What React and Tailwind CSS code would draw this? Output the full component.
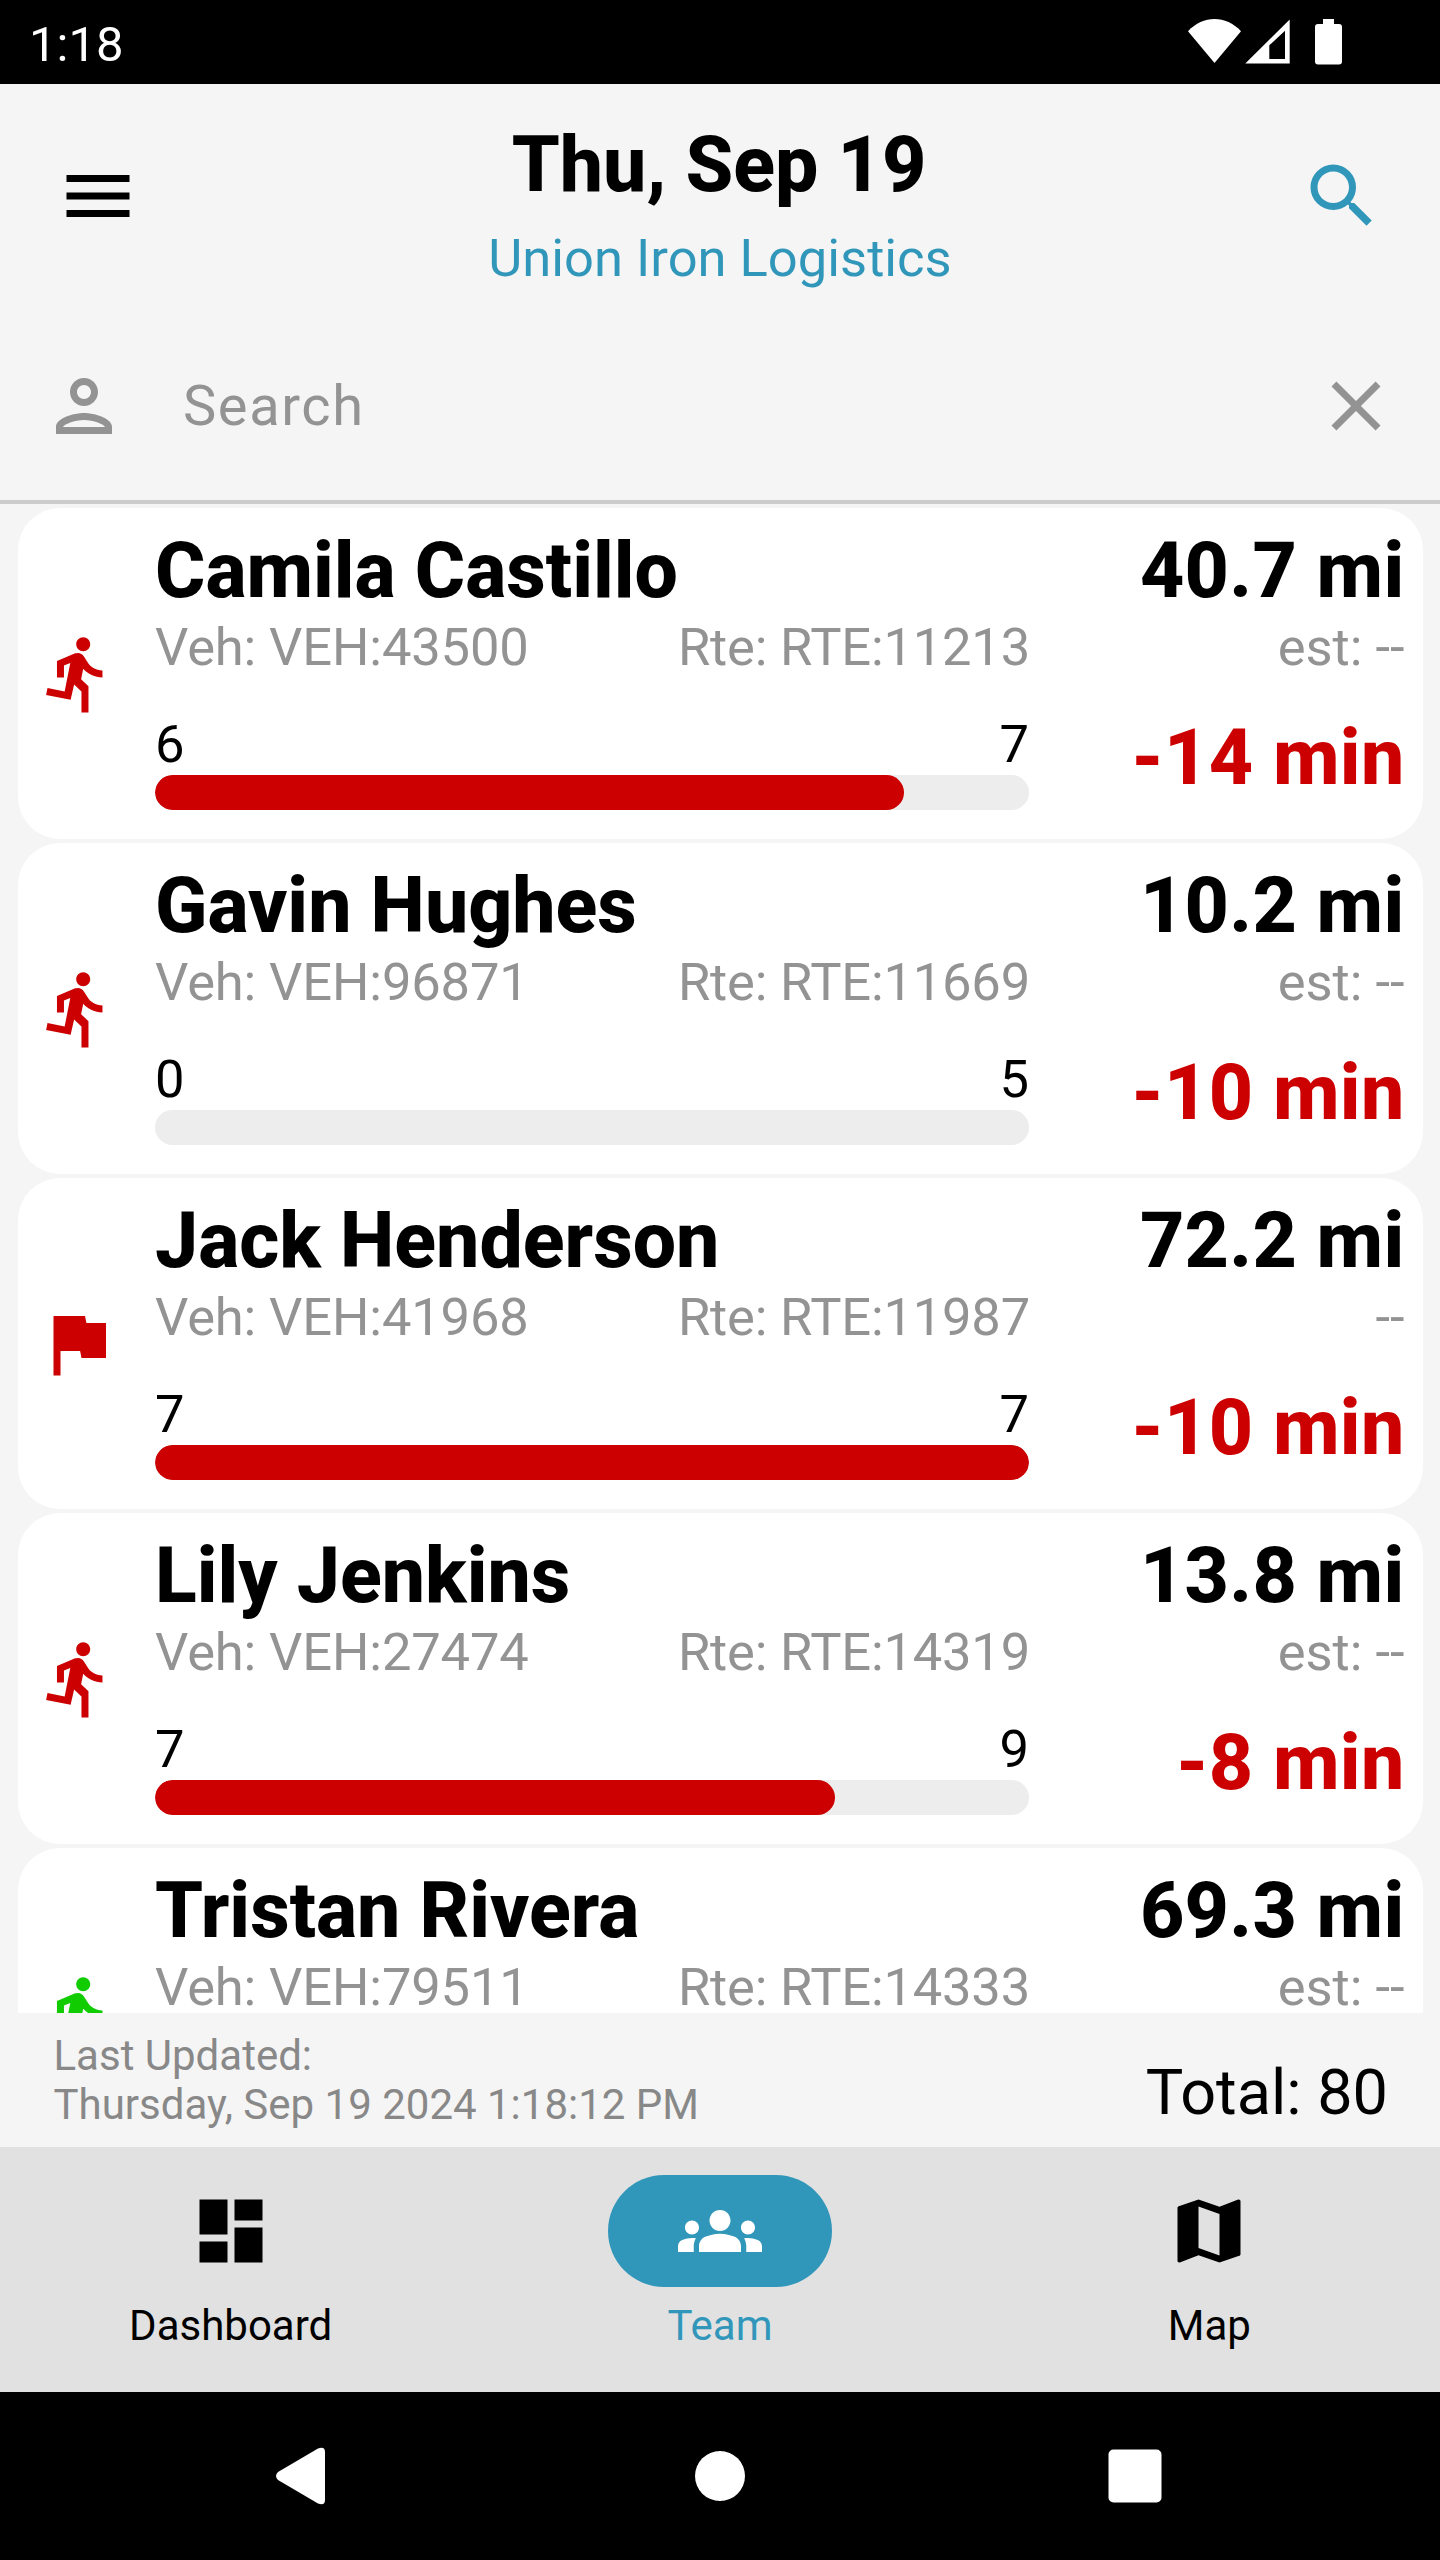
import {
  MdClose,
  MdDashboard,
  MdDirectionsRun,
  MdFlag,
  MdGroups,
  MdMap,
  MdMenu,
  MdOutlinePerson,
  MdSearch,
} from "react-icons/md";

const drivers = [
  {
    name: "Camila Castillo",
    vehicle: "VEH:43500",
    route: "RTE:11213",
    done: 6,
    total: 7,
    miles: "40.7 mi",
    estimate: "est: --",
    delta: "-14 min",
    status: "late",
  },
  {
    name: "Gavin Hughes",
    vehicle: "VEH:96871",
    route: "RTE:11669",
    done: 0,
    total: 5,
    miles: "10.2 mi",
    estimate: "est: --",
    delta: "-10 min",
    status: "late",
  },
  {
    name: "Jack Henderson",
    vehicle: "VEH:41968",
    route: "RTE:11987",
    done: 7,
    total: 7,
    miles: "72.2 mi",
    estimate: "--",
    delta: "-10 min",
    status: "finished",
  },
  {
    name: "Lily Jenkins",
    vehicle: "VEH:27474",
    route: "RTE:14319",
    done: 7,
    total: 9,
    miles: "13.8 mi",
    estimate: "est: --",
    delta: "-8 min",
    status: "late",
  },
  {
    name: "Tristan Rivera",
    vehicle: "VEH:79511",
    route: "RTE:14333",
    miles: "69.3 mi",
    estimate: "est: --",
    status: "ontime",
  },
];

const StatusBar = () => {
  return (
    <div className="h-[84px] shrink-0 bg-black flex items-center justify-between pl-[29px] pr-[97px] text-white">
      <span className="text-[49px] leading-none pt-1">1:18</span>
      <svg width="156" height="84" viewBox="0 0 156 84" fill="#fff">
        <path d="M1 31.3C16 15 39 15 54 31.3L27.5 63Z" />
        <path
          fillRule="evenodd"
          d="M102.7 19.5V63.5H58.3ZM98 30.7L82.3 45.3V59H98Z"
        />
        <path d="M136 19h11v5h5a3 3 0 0 1 3 3v34.500a3 3 0 0 1-3 3h-21a3 3 0 0 1-3-3V27a3 3 0 0 1 3-3h5z" />
      </svg>
    </div>
  );
};

const Header = () => {
  return (
    <div className="h-[280px] shrink-0 flex justify-between items-start px-14">
      <MdMenu className="size-[84px] mt-[70px]" />
      <div className="flex flex-col items-center pt-[36px]">
        <h1 className="text-[77px] leading-[90px] font-extrabold mr-[2px]">
          Thu, Sep 19
        </h1>
        <h2 className="text-[52.5px] leading-[62px] mt-[17px] text-[#3197ba]">
          Union Iron Logistics
        </h2>
      </div>
      <MdSearch className="size-[84px] mt-[70px] text-[#3197ba]" />
    </div>
  );
};

const SearchBar = () => {
  return (
    <div className="h-[140px] shrink-0 flex items-center px-[42px] pb-[52px] border-b-4 border-[#cccccc] text-[#939393]">
      <MdOutlinePerson className="size-[84px]" />
      <span className="text-[56px] tracking-[1.6px] ml-[57px] grow">
        Search
      </span>
      <MdClose className="size-[84px]" />
    </div>
  );
};

const StatusIcon = ({ status }) => {
  if (status === "finished") {
    return <MdFlag className="size-[84px] text-[#cc0000]" />;
  }
  if (status === "ontime") {
    return <MdDirectionsRun className="size-[84px] text-[#10cc00]" />;
  }
  return <MdDirectionsRun className="size-[84px] text-[#cc0000]" />;
};

const DriverCard = ({ driver }) => {
  return (
    <div className="h-[331px] shrink-0 flex bg-white rounded-[42px] px-[18px]">
      <div className="w-[119.5px] flex items-center">
        <StatusIcon status={driver.status} />
      </div>
      <div className="w-[874px] flex flex-col pt-[18px]">
        <div className="text-[77px] leading-[90px] font-extrabold whitespace-nowrap">
          {driver.name}
        </div>
        <div className="flex justify-between text-[52.5px] leading-[62px] text-[#939393]">
          <span className="tracking-[-0.15px]">Veh: {driver.vehicle}</span>
          <span className="tracking-[-0.2px] mr-[-1px]">
            Rte: {driver.route}
          </span>
        </div>
        {driver.total && (
          <>
            <div className="flex justify-between text-[52.5px] leading-[62px] mt-[35px]">
              <span>{driver.done}</span>
              <span>{driver.total}</span>
            </div>
            <div className="h-[35px] bg-[#ededed] rounded-full overflow-hidden">
              <div
                className="h-full bg-[#cc0000] rounded-full"
                style={{ width: `${(driver.done / driver.total) * 100}%` }}
              ></div>
            </div>
          </>
        )}
      </div>
      <div className="grow flex flex-col items-end pt-[18px]">
        <div className="text-[77px] leading-[90px] font-extrabold tracking-[0.3px]">
          {driver.miles}
        </div>
        <div className="text-[52.5px] leading-[62px] text-[#939393]">
          {driver.estimate}
        </div>
        <div className="text-[77px] leading-[90px] mt-[35px] font-extrabold tracking-[0.3px] text-[#cc0000]">
          {driver.delta}
        </div>
      </div>
    </div>
  );
};

const NavItem = ({ icon, label, active }) => {
  return (
    <div className="flex-1 flex flex-col items-center pt-7">
      <div
        className={
          active
            ? "w-56 h-28 rounded-full flex items-center justify-center bg-[#3197ba] text-white"
            : "w-56 h-28 flex items-center justify-center text-black"
        }
      >
        {icon}
      </div>
      <span
        className={
          active
            ? "text-[42px] leading-[56px] mt-[11px] text-[#3197ba]"
            : "text-[42px] leading-[56px] mt-[11px] text-black"
        }
      >
        {label}
      </span>
    </div>
  );
};

const SystemNav = () => {
  return (
    <div className="h-[168px] shrink-0 bg-black flex justify-center">
      <svg width="900" height="168" viewBox="0 0 900 168" fill="#fff">
        <path d="M8 80L48 56.500Q55 54 55 60V108Q55 114 48 111.500L8 88Q4 84 8 80Z" />
        <circle cx="450" cy="84" r="25" />
        <rect x="838.500" y="57.500" width="53" height="53" rx="5" />
      </svg>
    </div>
  );
};

export default function App() {
  return (
    <div className="w-[1440px] h-[2560px] flex flex-col overflow-hidden bg-[#f5f5f5] text-black font-['Roboto',sans-serif]">
      <StatusBar />
      <Header />
      <SearchBar />
      <div className="h-[1509px] shrink-0 flex flex-col gap-1 pt-1 px-[17.5px] overflow-hidden">
        {drivers.map((driver) => (
          <DriverCard key={driver.name} driver={driver} />
        ))}
      </div>
      <div className="h-[134px] shrink-0 flex justify-between pl-[53.5px] pr-[52px]">
        <div className="text-[42px] leading-[49px] pt-[18px] text-[#888888]">
          <div>Last Updated:</div>
          <div>Thursday, Sep 19 2024 1:18:12 PM</div>
        </div>
        <div className="text-[63px] leading-[74px] pt-[43px]">Total: 80</div>
      </div>
      <div className="h-[245px] shrink-0 flex gap-7 bg-[#e1e1e1]">
        <NavItem
          icon={<MdDashboard className="size-[84px]" />}
          label="Dashboard"
        />
        <NavItem
          icon={<MdGroups className="size-[84px]" />}
          label="Team"
          active
        />
        <NavItem icon={<MdMap className="size-[84px]" />} label="Map" />
      </div>
      <SystemNav />
    </div>
  );
}
